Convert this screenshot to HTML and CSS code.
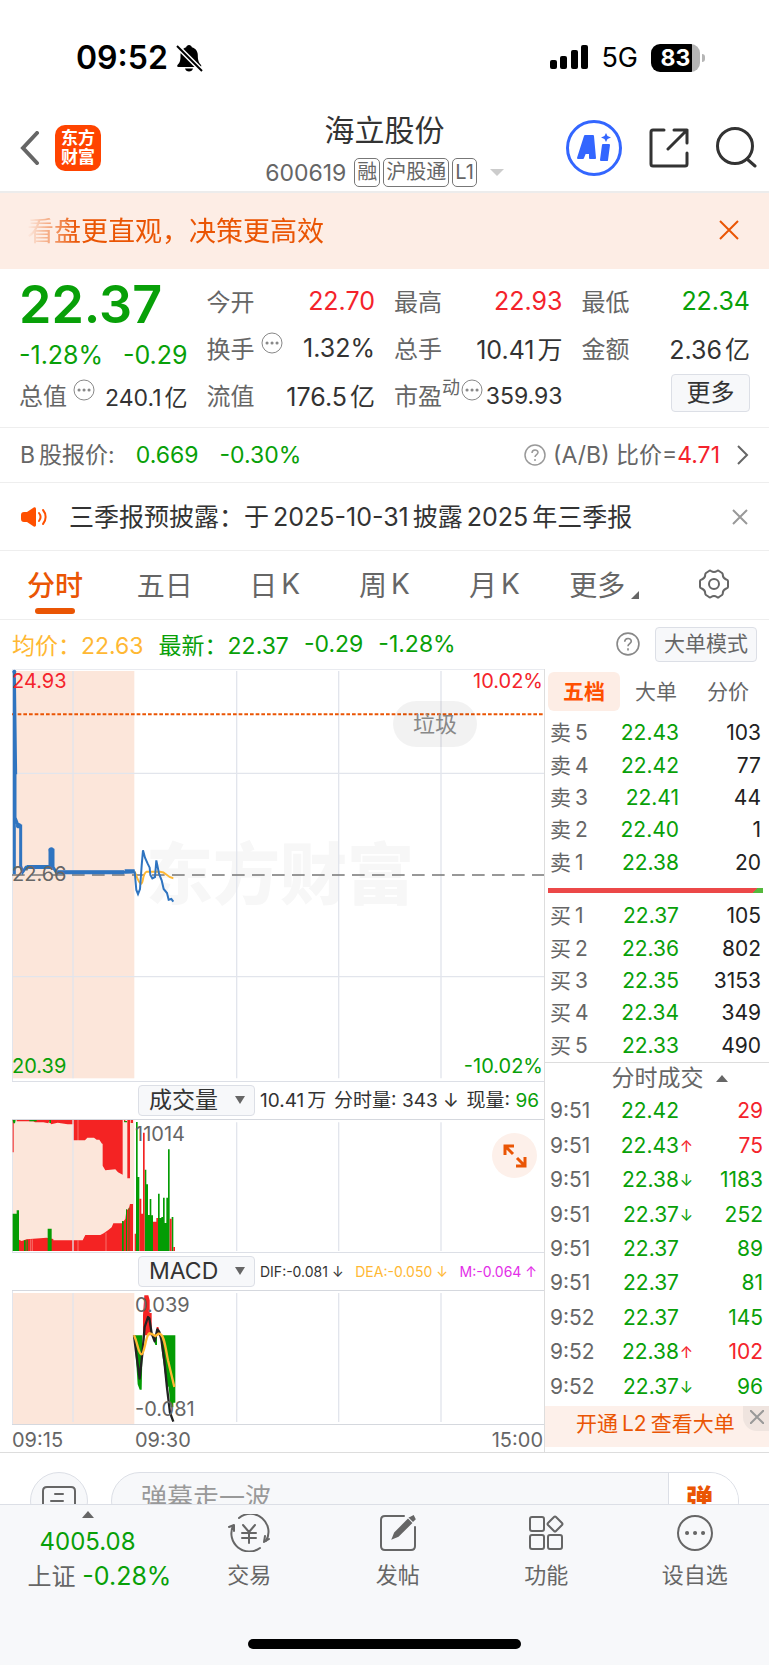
FILE: index.html
```html
<!DOCTYPE html>
<html lang="zh-CN">
<head>
    <meta charset="UTF-8">
    <meta name="viewport" content="width=device-width, initial-scale=1.0">
    <title>海立股份 600619</title>
    <link rel="stylesheet" href="styles.css">
</head>
<body>
    <div class="status-bar">
        <div class="status-left">
            <span class="clock">09:52</span>
            <svg width="27" height="28" viewBox="0 0 27 28">
                <path d="M13 1c1.500 0 2.500 1 2.800 2.200 4 1.200 6 4.300 6 8.300 0 5 1 7 3.200 9.500.7 1 .2 2-1 2H2.500c-1.300 0-1.700-1-1-2C4 18.500 4.500 16.500 4.500 11.500c0-4 2-7.100 5.700-8.300C10.500 2 11.500 1 13 1z"/>
                <path d="M9 24.500h8c-.5 2-2 3-4 3s-3.500-1-4-3z"/>
                <path d="M0 1l26 26" stroke="#fff" stroke-width="5"/>
                <path d="M1 2l25 25" stroke="#000" stroke-width="2"/>
            </svg>
        </div>
        <div class="status-right">
            <svg width="38" height="25" viewBox="0 0 38 25">
                <rect x="0" y="15" width="7" height="9" rx="2"/>
                <rect x="10" y="11" width="7" height="13" rx="2"/>
                <rect x="21" y="5" width="7" height="19" rx="2"/>
                <rect x="31" y="0" width="7" height="24" rx="2"/>
            </svg>
            <span class="network">5G</span>
            <span class="battery">83</span>
        </div>
    </div>

    <header class="top-nav">
        <div class="nav-left">
            <button class="icon-btn" aria-label="返回">
                <svg width="20" height="34" viewBox="0 0 20 34" fill="none" stroke="#666" stroke-width="4" stroke-linecap="round"><path d="M17 2L3 17l14 15"/></svg>
            </button>
            <a class="logo" href="#">东方<br>财富</a>
        </div>
        <div class="nav-title">
            <h1>海立股份</h1>
            <p class="code">600619 <span class="tag">融</span><span class="tag">沪股通</span><span class="tag">L1</span><i class="caret-down"></i></p>
        </div>
        <div class="nav-right">
            <button class="icon-btn" aria-label="AI">
                <svg width="56" height="56" viewBox="0 0 56 56">
                    <circle cx="28" cy="28" r="26.500" fill="none" stroke="#3366ff" stroke-width="3"/>
                    <path fill="#3366ff" fill-rule="evenodd" stroke="#3366ff" stroke-width="2" stroke-linejoin="round" d="M12 38l7-22h8l2 22h-5v-5h-5l-2 5zM20 28h3v-5z"/>
                    <path fill="#3366ff" stroke="#3366ff" stroke-width="2" stroke-linejoin="round" d="M37 25h6l-2 15h-6z"/>
                    <path fill="#3366ff" d="M40 13l1.500 3L45 17.500l-3.500 1.500L40 22l-1.500-3L35 17.500l3.500-1.500z"/>
                </svg>
            </button>
            <button class="icon-btn" aria-label="分享">
                <svg width="40" height="40" viewBox="0 0 40 40" fill="none" stroke="#333" stroke-width="3" stroke-linecap="round" stroke-linejoin="round"><path d="M15 2H4a2 2 0 0 0-2 2v32a2 2 0 0 0 2 2h32a2 2 0 0 0 2-2V25M25 2h13v13M38 2L19 21"/></svg>
            </button>
            <button class="icon-btn" aria-label="搜索">
                <svg width="41" height="41" viewBox="0 0 41 41" fill="none" stroke="#333" stroke-width="3" stroke-linecap="round"><circle cx="19" cy="19" r="17.500"/><path d="M31 32l8 7"/></svg>
            </button>
        </div>
    </header>

    <div class="banner">
        <p>看盘更直观，决策更高效</p>
        <button class="icon-btn" aria-label="关闭">
            <svg width="20" height="20" viewBox="0 0 20 20" stroke="#ea5504" stroke-width="2"><path d="M1 1l18 18M19 1L1 19"/></svg>
        </button>
    </div>

    <section class="quote">
        <div class="quote-main green">
            <strong class="price">22.37</strong>
            <div class="change"><span>-1.28%</span><span>-0.29</span></div>
        </div>
        <div class="item"><span>今开</span><b class="red">22.70</b></div>
        <div class="item"><span>最高</span><b class="red">22.93</b></div>
        <div class="item"><span>最低</span><b class="green">22.34</b></div>
        <div class="item"><span>换手<svg class="dots" viewBox="0 0 22 22"><circle cx="11" cy="11" r="10"/><path d="M6 11h.1M11 11h.1M16 11h.1"/></svg></span><b>1.32%</b></div>
        <div class="item"><span>总手</span><b>10.41<i class="unit">万</i></b></div>
        <div class="item"><span>金额</span><b>2.36<i class="unit">亿</i></b></div>
        <div class="item small"><span>总值<svg class="dots" viewBox="0 0 22 22"><circle cx="11" cy="11" r="10"/><path d="M6 11h.1M11 11h.1M16 11h.1"/></svg></span><b>240.1<i class="unit">亿</i></b></div>
        <div class="item"><span>流值</span><b>176.5<i class="unit">亿</i></b></div>
        <div class="item small"><span>市盈<sup>动</sup><svg class="dots tight" viewBox="0 0 22 22"><circle cx="11" cy="11" r="10"/><path d="M6 11h.1M11 11h.1M16 11h.1"/></svg></span><b>359.93</b></div>
        <div class="item end"><button class="more-btn">更多</button></div>
    </section>

    <section class="b-share">
        <span><b class="num first">B</b>股报价:</span>
        <span class="green">0.669</span>
        <span class="green">-0.30%</span>
        <a class="ratio" href="#">
            <svg width="22" height="22" viewBox="0 0 22 22" fill="none" stroke="#999" stroke-width="1.500"><circle cx="11" cy="11" r="10"/><path d="M8 9c0-4 6-4 6-.5 0 2-3 2.300-3 4.500M11 15v2"/></svg>
            <span>(A/B) 比价=<em class="red">4.71</em></span>
            <svg width="12" height="20" viewBox="0 0 12 20" fill="none" stroke="#666" stroke-width="2"><path d="M1 1l9 9-9 9"/></svg>
        </a>
    </section>

    <section class="notice">
        <svg width="26" height="20" viewBox="0 0 26 20">
            <path fill="#ff5000" d="M3 5h3l6-4c1-1 3-1 3 1v16c0 2-2 2-3 1l-6-4H3c-2 0-3-1-3-3V8c0-2 1-3 3-3z"/>
            <path fill="none" stroke="#ff5000" stroke-width="2" stroke-linecap="round" d="M18 6c2 2.500 2 5.500 0 8M22 3c3.500 4 3.500 10 0 14"/>
        </svg>
        <p>三季报预披露：于<b class="num">2025-10-31</b>披露<b class="num">2025</b>年三季报</p>
        <button class="icon-btn" aria-label="关闭">
            <svg width="16" height="16" viewBox="0 0 16 16" stroke="#999" stroke-width="2"><path d="M1 1l14 14M15 1L1 15"/></svg>
        </button>
    </section>

    <nav class="tabs">
        <button class="active">分时</button>
        <button>五日</button>
        <button>日<b class="num">K</b></button>
        <button>周<b class="num">K</b></button>
        <button>月<b class="num">K</b></button>
        <button class="has-corner">更多</button>
        <button aria-label="设置">
            <svg width="32" height="30" viewBox="0 0 32 30" fill="none" stroke="#666" stroke-width="2" stroke-linejoin="round">
                <path d="M11 2q1-1 2 0 3 2 6 0 1-1 2 0l3 2q1 1 .8 2 0 3 3.500 4.500 1.700.5 1.700 1.500v6q0 1-1.700 1.500-3.500 1.500-3.500 4.500.2 1-.8 2l-3 2q-1 1-2 0-3-2-6 0-1 1-2 0l-3-2q-1-1-.8-2 0-3-3.500-4.500Q2 19 2 18v-6q0-1 1.700-1.500Q7.200 9 7.200 6 7 5 8 4z"/>
                <circle cx="16" cy="15" r="5"/>
            </svg>
        </button>
    </nav>

    <div class="avg-row">
        <span class="yellow">均价：22.63</span>
        <span class="green latest">最新：22.37</span>
        <span class="green">-0.29</span>
        <span class="green">-1.28%</span>
        <svg class="help" width="24" height="24" viewBox="0 0 22 22" fill="none" stroke="#888" stroke-width="1.500"><circle cx="11" cy="11" r="10"/><path d="M8 9c0-4 6-4 6-.5 0 2-3 2.300-3 4.500M11 15v2"/></svg>
        <button class="mode-btn">大单模式</button>
    </div>

    <main class="board">
        <div class="charts">
            <div class="plot">
                <span class="watermark">东方财富</span>
                <!-- price: 1596 x 1236 units, three units to a pixel -->
                <svg class="price-svg" viewBox="36 24 1596 1236" preserveAspectRatio="none">
                    <rect x="36" y="30" width="367" height="1222" fill="#fce6da"/>
                    <path class="grid" d="M36 24H1632M37 30V1260M219 30V1252M710 30V1252M1016 30V1252M1323 30V1252M36 337H1632M36 947H1632"/>
                    <path d="M36 642H1632" stroke="#777" stroke-width="5" stroke-dasharray="38 22" fill="none"/>
                    <path d="M36 160H1632" stroke="#ea5504" stroke-width="6" stroke-dasharray="11 6" fill="none"/>
                    <path d="M404 632C412 650 416 668 424 668 430 665 428 636 440 632H480C500 632 500 650 520 652" stroke="#ffb833" stroke-width="6" fill="none"/>
                    <path d="M43 30V640M43 30l4 310M45 340V470l6 15 5 10h6v120l6 18 10-14h72V568h9v50l10 16H374l30-2" stroke="#2f74c0" stroke-width="9" fill="none"/>
                    <path d="M80 618h70M172 634h200M374 631h30" stroke="#2f74c0" stroke-width="12" fill="none"/>
                    <circle cx="43" cy="32" r="6" fill="#2f74c0"/><circle cx="56" cy="494" r="8" fill="#2f74c0"/><circle cx="154" cy="567" r="8" fill="#2f74c0"/>
                    <path d="M404 632l5 55 5 12 6-15 5-70 4-46 6 22 8 18 6 12 2 22 6 10 8-4 4-50 2 10 6 30 8 20 6 26 10 12 5 20 8-2 6 8" stroke="#2f74c0" stroke-width="6" fill="none"/>
                </svg>
                <span class="label top-left red">24.93</span>
                <span class="label top-right red">10.02%</span>
                <span class="label mid-left">22.66</span>
                <span class="label bottom-left green">20.39</span>
                <span class="label bottom-right green">-10.02%</span>
                <span class="bubble">垃圾</span>
            </div>

            <div class="toolbar">
                <label class="picker"><select aria-label="成交指标"><option>成交量</option></select></label>
                <p class="volume-text"><span>10.41<i class="unit">万</i></span><span>分时量: 343 ↓</span><span>现量: <em class="green">96</em></span></p>
            </div>
            <div class="plot">
                <svg class="volume-svg" viewBox="36 117 1596 396" preserveAspectRatio="none">
                    <rect x="36" y="117" width="367" height="393" fill="#fce6da"/>
                    <path class="grid" d="M37 117V513M710 124V510M1016 124V510M1323 124V510"/>
                    <g fill="#f42323">
                        <path d="M50 117v4h50l5 3h25l15 3 3-8 5 11 20-5 30 5h17v48h35l7-8h20l8 6h8l8 12h2v66l8 14 30-3 8 9 14 7V117z"/>
                        <path d="M38 117h3v97h-3zM382 117h8v175h-8zM372 117h4v6h-4zM392 117h7v9h-7z"/>
                        <path d="M57 510V476l8 4 15-5 60-5 20 4v4h88l8-16h45l10-5 14-10 10-8 5-12h26l10-13 3-25 8-8 3-12h9V510z"/>
                    </g>
                    <g fill="#049c04">
                        <path d="M38 117h9l-2 10h-5zM88 117h22v4H88zM148 117h5v9h-5zM373 120h8v4h-8z"/>
                        <path d="M38 510V398h12v-10h7v122zM143 443h12v67h-12zM366 420h5v90h-5zM378 385h3v125h-3zM386 380h2v130h-2zM72 478h5v32h-5zM80 476h3v34h-3z"/>
                        <path d="M408 123h5v165h5v222h-10zM434 266h5v44h5v92h5v-48h5v49h5v107h-25zM474 338h5v73h5v-3h5v-58h5v76h5v-76h5V205h5v305h-35zM515 408h5v102h-5z"/>
                    </g>
                    <path fill="#f42323" d="M404 458h4v52h-4zM418 353h6v45h5V155h5v355h-16zM459 422h10v-11h5v99h-15zM509 413h6v97h-6zM520 498h5v12h-5z"/>
                    <path d="M219 117V510" class="grid"/>
                    <path d="M234 117V180M92 475V510M97 475V510M234 478V510M318 455V510" stroke="#fce6da" stroke-opacity=".6" stroke-width="2"/>
                </svg>
                <span class="label vol-max">11014</span>
                <button class="expand" aria-label="全屏">
                    <svg width="24" height="24" viewBox="0 0 24 24" fill="none" stroke="#ea5504" stroke-width="3"><path d="M2 11V2h9M2 2l8 8M22 13v9h-9M22 22l-8-8"/></svg>
                </button>
            </div>

            <div class="toolbar">
                <label class="picker"><select aria-label="技术指标"><option>MACD</option></select></label>
                <p class="macd-text"><span>DIF:-0.081 ↓</span><span class="yellow">DEA:-0.050 ↓</span><span class="magenta">M:-0.064 ↑</span></p>
            </div>
            <div class="plot">
                <svg class="macd-svg" viewBox="36 630 1596 399" preserveAspectRatio="none">
                    <rect x="36" y="636" width="367" height="393" fill="#fce6da"/>
                    <path class="grid" d="M37 630V1029M219 636V1023M710 636V1023M1016 636V1023M1323 636V1023"/>
                    <path fill="#049c04" d="M403 763h24v66l-2 97h-6l-6-16-4-60zM460 763h11v29h-5l-4-12zM482 763h44v202h-6v14h-8l-6-60-8-14-6-48-6-42z"/>
                    <path fill="#f42323" d="M429 763v-60l4-60h12l4 15v38h6v67zM468 763l2-25h5l5 15v10z"/>
                    <path d="M402 763l10 80 7 50 8-75 7-80 10-30 4 4 7 45 9 24 8-36 6 8 6 22 9 65 8 80 9 75 10 27" stroke="#222" stroke-width="7" fill="none" stroke-linejoin="round"/>
                    <path d="M402 763c10 20 14 57 22 57 10 0 12-55 24-63l8 2 10 6 10-7c16-2 20 40 28 80l19 80" stroke="#ffb833" stroke-width="7" fill="none"/>
                </svg>
                <span class="label macd-max">0.039</span>
                <span class="label macd-min">-0.081</span>
            </div>

            <div class="axis"><span>09:15</span><span>09:30</span><span>15:00</span></div>
        </div>

        <aside class="side">
            <div class="side-tabs">
                <button class="active">五档</button><button>大单</button><button>分价</button>
            </div>
            <table class="levels">
                <tr><th>卖<b class="num">5</b></th><td>22.43</td><td>103</td></tr>
                <tr><th>卖<b class="num">4</b></th><td>22.42</td><td>77</td></tr>
                <tr><th>卖<b class="num">3</b></th><td>22.41</td><td>44</td></tr>
                <tr><th>卖<b class="num">2</b></th><td>22.40</td><td>1</td></tr>
                <tr><th>卖<b class="num">1</b></th><td>22.38</td><td>20</td></tr>
            </table>
            <div class="ratio-bar"></div>
            <table class="levels">
                <tr><th>买<b class="num">1</b></th><td>22.37</td><td>105</td></tr>
                <tr><th>买<b class="num">2</b></th><td>22.36</td><td>802</td></tr>
                <tr><th>买<b class="num">3</b></th><td>22.35</td><td>3153</td></tr>
                <tr><th>买<b class="num">4</b></th><td>22.34</td><td>349</td></tr>
                <tr><th>买<b class="num">5</b></th><td>22.33</td><td>490</td></tr>
            </table>
            <button class="deals-title">分时成交<i class="caret-up"></i></button>
            <table class="deals">
                <tr><th>9:51</th><td>22.42</td><td></td><td class="red">29</td></tr>
                <tr><th>9:51</th><td>22.43</td><td class="red">↑</td><td class="red">75</td></tr>
                <tr><th>9:51</th><td>22.38</td><td>↓</td><td>1183</td></tr>
                <tr><th>9:51</th><td>22.37</td><td>↓</td><td>252</td></tr>
                <tr><th>9:51</th><td>22.37</td><td></td><td>89</td></tr>
                <tr><th>9:51</th><td>22.37</td><td></td><td>81</td></tr>
                <tr><th>9:52</th><td>22.37</td><td></td><td>145</td></tr>
                <tr><th>9:52</th><td>22.38</td><td class="red">↑</td><td class="red">102</td></tr>
                <tr><th>9:52</th><td>22.37</td><td>↓</td><td>96</td></tr>
            </table>
            <div class="l2">
                <a href="#">开通<b class="num">L2</b>查看大单</a>
                <button class="l2-close" aria-label="关闭">
                    <svg width="14" height="14" viewBox="0 0 14 14" stroke="#999" stroke-width="2"><path d="M0 0l14 14M14 0L0 14"/></svg>
                </button>
            </div>
        </aside>
    </main>

    <div class="danmaku">
        <button class="danmaku-list" aria-label="弹幕列表">
            <svg width="34" height="30" viewBox="0 0 34 30" fill="none" stroke="#666" stroke-width="2" stroke-linecap="round"><path d="M1 28V5q0-4 4-4h24q4 0 4 4v23M13 8h8M9 15h12"/></svg>
        </button>
        <div class="danmaku-box">
            <input type="text" placeholder="弹幕走一波" aria-label="弹幕">
            <button class="danmaku-send">弹</button>
        </div>
    </div>

    <footer class="bottom">
        <nav class="bottom-nav">
            <a class="index" href="#">
                <i class="caret-up"></i>
                <span class="green">4005.08</span>
                <span class="index-name">上证 <em class="green">-0.28%</em></span>
            </a>
            <a href="#">
                <svg width="44" height="38" viewBox="0 0 44 38" fill="none" stroke="#666" stroke-width="2" stroke-linecap="round" stroke-linejoin="round"><path d="M12 4A18 18 0 0 1 39 27M33 34A18 18 0 0 1 6 12M2 13l5-2 0 6M42 25l-5 3 1-6M16 11l6 7 6-7M22 18v11M15 19h14M15 24h14"/></svg>
                <span>交易</span>
            </a>
            <a href="#">
                <svg width="38" height="38" viewBox="0 0 38 38" fill="none" stroke="#666" stroke-width="2" stroke-linecap="round"><path d="M25 2H6Q2 2 2 6v26q0 4 4 4h26q4 0 4-4V13"/><path d="M14 24l2-5L29 6l3 3-13 13z" fill="#666"/><path d="M32 4l2-1 1 2-1 1z" fill="#666" stroke-width="3"/></svg>
                <span>发帖</span>
            </a>
            <a href="#">
                <svg width="36" height="38" viewBox="0 0 36 38" fill="none" stroke="#666" stroke-width="2" stroke-linejoin="round"><rect x="2" y="3" width="14" height="14" rx="2"/><rect x="2" y="21" width="14" height="14" rx="2"/><rect x="20" y="21" width="14" height="14" rx="2"/><path d="M26 3q1-1 2 0l6 6q1 1 0 2l-6 6q-1 1-2 0l-6-6q-1-1 0-2z"/></svg>
                <span>功能</span>
            </a>
            <a href="#">
                <svg width="38" height="38" viewBox="0 0 38 38" fill="none" stroke="#666" stroke-width="2"><circle cx="19" cy="19" r="17"/><path d="M11 19h.1M19 19h.1M27 19h.1" stroke-width="4" stroke-linecap="round"/></svg>
                <span>设自选</span>
            </a>
        </nav>
        <div class="home-indicator"></div>
    </footer>
</body>
</html>
```
FILE: styles.css
```css
* {
    margin: 0;
    padding: 0;
    box-sizing: border-box;
}

body {
    font-family: Inter, "Noto Sans CJK SC", sans-serif;
    background: #fff;
    color: #333;
    min-height: 100vh;
    display: flex;
    flex-direction: column;
}

button, input, select {
    font-family: inherit;
    color: inherit;
    background: none;
    border: none;
}

a {
    color: inherit;
    text-decoration: none;
}

b, em, i, th {
    font-weight: normal;
    font-style: normal;
}

svg {
    display: block;
    flex-shrink: 0;
}

.icon-btn {
    display: block;
}

.red {
    color: #f4232b;
}

.green {
    color: #08a008;
}

.yellow {
    color: #ffb833;
}

.magenta {
    color: #e32ee8;
}

/* latin text between chinese characters */
.num {
    margin: 0 4px;
}

.num.first {
    margin-left: 0;
}

.unit {
    margin-left: 3px;
}

.caret-up, .caret-down {
    display: inline-block;
    border: 6px solid transparent;
}

.caret-up {
    border-bottom: 7px solid #666;
    border-top: 0;
}

.caret-down {
    border-width: 7px;
    border-top-color: #ccc;
    border-bottom: 0;
}

/* status bar */
.status-bar {
    height: 106px;
    padding: 9px 69px 0 76px;
    display: flex;
    align-items: center;
    justify-content: space-between;
    color: #000;
}

.status-left, .status-right {
    display: flex;
    align-items: center;
}

.status-left {
    gap: 8px;
}

.status-right {
    gap: 13px;
}

.clock {
    font-size: 32px;
    font-weight: 600;
}

.network {
    font-size: 27px;
}

.battery {
    position: relative;
    width: 49px;
    height: 28px;
    border-radius: 9px;
    background: linear-gradient(90deg, #000 83%, #b5b5b5 83%);
    color: #fff;
    font-size: 23px;
    font-weight: 700;
    line-height: 28px;
    text-align: center;
}

.battery::after {
    content: "";
    position: absolute;
    left: 51px;
    top: 10px;
    width: 3px;
    height: 8px;
    border-radius: 0 3px 3px 0;
    background: #b5b5b5;
}

/* nav */
.top-nav {
    height: 87px;
    padding: 0 12px 2px;
    border-bottom: 2px solid #ececec;
    display: grid;
    grid-template-columns: 1fr auto 1fr;
    align-items: center;
}

.nav-left, .nav-right {
    display: flex;
    align-items: center;
}

.nav-left {
    padding-left: 8px;
    gap: 15px;
}

.nav-right {
    justify-content: flex-end;
    gap: 27px;
}

.logo {
    width: 46px;
    height: 46px;
    padding-top: 4px;
    border-radius: 10px;
    background: #ff4400;
    color: #fff;
    font-size: 17px;
    font-weight: 700;
    line-height: 19px;
    text-align: center;
}

.nav-title {
    text-align: center;
}

.nav-title h1 {
    margin-bottom: 6px;
    font-size: 30px;
    font-weight: 400;
    line-height: 44px;
}

.code {
    display: flex;
    align-items: center;
    justify-content: center;
    gap: 3px;
    font-size: 23px;
    line-height: 30px;
    color: #666;
}

.tag {
    padding: 0 2px;
    border: 1px solid #777;
    border-radius: 5px;
    font-size: 20px;
    line-height: 27px;
}

.tag:first-of-type {
    margin-left: 5px;
}

.code .caret-down {
    margin-left: 10px;
}

/* banner */
.banner {
    height: 76px;
    padding: 0 30px 2px 27px;
    display: flex;
    align-items: center;
    justify-content: space-between;
    background: #fdede5;
    color: #ea5504;
    font-size: 27px;
}

.banner p {
    padding-bottom: 2px;
    -webkit-mask-image: linear-gradient(90deg, transparent, #000 50px);
    mask-image: linear-gradient(90deg, transparent, #000 50px);
}

/* quote */
.quote {
    padding: 9px 19px 8px;
    display: grid;
    grid-template-columns: repeat(4, 1fr);
    grid-auto-rows: 47px;
    column-gap: 19px;
    border-bottom: 1px solid #eee;
}

.quote-main {
    grid-row: span 2;
}

.price {
    display: block;
    font-size: 52px;
    font-weight: 600;
    line-height: 54px;
}

.change {
    display: flex;
    justify-content: space-between;
    font-size: 25px;
    line-height: 46px;
}

.item {
    display: flex;
    align-items: center;
    justify-content: space-between;
    font-size: 24px;
    white-space: nowrap;
}

.item span {
    display: flex;
    padding-bottom: 3px;
    color: #666;
}

.item b {
    padding-bottom: 2px;
    font-size: 25px;
}

.item.end {
    justify-content: flex-end;
}

.item.small b {
    padding-bottom: 0;
    font-size: 23px;
}

.item sup {
    font-size: 18px;
    line-height: 22px;
}

.dots {
    width: 22px;
    height: 22px;
    margin: 2px 0 0 6px;
    fill: none;
    stroke: #888;
    stroke-width: 1;
}

.dots.tight {
    margin-left: 1px;
}

.dots path {
    stroke-width: 3;
    stroke-linecap: round;
}

.more-btn {
    width: 79px;
    height: 38px;
    margin-bottom: 5px;
    border: 1px solid #dcdfe6;
    border-radius: 4px;
    background: #f7f8fa;
    font-size: 24px;
    line-height: 34px;
}

/* b share */
.b-share {
    height: 55px;
    padding: 0 20px;
    display: flex;
    align-items: center;
    gap: 21px;
    border-bottom: 1px solid #eee;
    font-size: 23px;
    line-height: 32px;
    color: #666;
}

.ratio {
    display: flex;
    align-items: center;
    gap: 7px;
    margin-left: auto;
}

.ratio span {
    margin-right: 10px;
}

/* notice */
.notice {
    height: 68px;
    padding: 0 21px;
    display: flex;
    align-items: center;
    gap: 22px;
    border-bottom: 1px solid #eee;
    font-size: 25px;
}

.notice p {
    flex: 1;
    padding-bottom: 3px;
}

/* tabs */
.tabs {
    height: 69px;
    display: grid;
    grid-template-columns: repeat(7, 1fr);
    border-bottom: 1px solid #eee;
}

.tabs button {
    position: relative;
    display: flex;
    align-items: center;
    justify-content: center;
    padding-bottom: 3px;
    font-size: 28px;
    color: #666;
}

.tabs .num {
    margin-right: 0;
}

.tabs .active {
    color: #ea5504;
    font-weight: 500;
}

.tabs .active::after {
    content: "";
    position: absolute;
    left: 50%;
    bottom: 5px;
    width: 40px;
    height: 6px;
    margin-left: -20px;
    border-radius: 3px;
    background: #ea5504;
}

.has-corner::after {
    content: "";
    align-self: flex-end;
    margin: 0 0 17px 6px;
    border-left: 8px solid transparent;
    border-bottom: 8px solid #666;
}

/* average row */
.avg-row {
    height: 49px;
    padding: 0 12px 1px;
    display: flex;
    align-items: center;
    gap: 15px;
    font-size: 23px;
}

.help {
    margin-left: auto;
}

.mode-btn {
    height: 35px;
    padding: 0 8px;
    border: 1px solid #dcdfe6;
    border-radius: 4px;
    background: #f7f8fa;
    color: #666;
    font-size: 21px;
    line-height: 30px;
}

/* board */
.board {
    padding-left: 12px;
    display: grid;
    grid-template-columns: 1fr 225px;
    border-bottom: 1px solid #ddd;
}

.charts {
    min-width: 0;
}

.plot {
    position: relative;
}

.plot svg {
    position: relative;
    width: 100%;
}

.price-svg {
    height: 412px;
}

.volume-svg {
    height: 132px;
}

.macd-svg {
    height: 133px;
}

.grid {
    fill: none;
    stroke: #e2e5ec;
    stroke-width: 4;
}

.watermark {
    position: absolute;
    top: 158px;
    left: 134px;
    color: #f7f7f7;
    font-size: 67px;
    font-weight: 900;
    line-height: 96px;
}

.label {
    position: absolute;
    font-size: 20px;
    line-height: 24px;
}

.top-left {
    top: 0;
    left: 0;
}

.top-right {
    top: 0;
    right: 1px;
}

.mid-left, .vol-max, .macd-max, .macd-min {
    color: #666;
}

.mid-left {
    top: 193px;
    left: 0;
}

.bottom-left {
    bottom: 3px;
    left: 0;
}

.bottom-right {
    bottom: 3px;
    right: 1px;
}

.vol-max, .macd-max {
    top: 2px;
    left: 123px;
}

.macd-min {
    bottom: 3px;
    left: 123px;
}

.bubble {
    position: absolute;
    top: 32px;
    right: 67px;
    padding: 0 20px;
    border-radius: 23px;
    background: rgba(0, 0, 0, 0.05);
    color: #888;
    font-size: 22px;
    line-height: 46px;
}

.toolbar {
    height: 39px;
    padding-left: 126px;
    display: flex;
    align-items: center;
    gap: 5px;
    border-top: 1px solid #dcdfe6;
    border-bottom: 1px solid #d5d8de;
}

.picker {
    position: relative;
    width: 117px;
}

.picker select {
    display: block;
    width: 100%;
    height: 31px;
    padding-left: 10px;
    appearance: none;
    border: 1px solid #dcdfe6;
    border-radius: 4px;
    background: #f7f8fa;
    font-size: 23px;
    line-height: 29px;
}

.picker::after {
    content: "";
    position: absolute;
    right: 10px;
    top: 11px;
    border: 5px solid transparent;
    border-top: 8px solid #666;
    border-bottom: 0;
}

.volume-text, .macd-text {
    flex: 1;
    display: flex;
    justify-content: space-between;
    white-space: nowrap;
}

.volume-text {
    padding-right: 5px;
    font-size: 19px;
    line-height: 30px;
}

.macd-text {
    padding-right: 7px;
    font-size: 14px;
}

.plot .expand {
    position: absolute;
    top: 13px;
    right: 7px;
    width: 45px;
    height: 45px;
    border-radius: 50%;
    background: #fdf0ea;
}

.plot .expand svg {
    width: 24px;
    margin: 0 auto;
}

.axis {
    height: 28px;
    border-top: 1px solid #d5d8de;
    display: flex;
    padding-right: 1px;
    font-size: 20px;
    line-height: 30px;
    color: #666;
}

.axis span:first-child {
    width: 123px;
}

.axis span:last-child {
    margin-left: auto;
}

/* side */
.side {
    border-left: 1px solid #ddd;
    font-size: 21px;
    color: #666;
}

.side-tabs {
    margin: 3px 5px 6px 3px;
    display: grid;
    grid-template-columns: repeat(3, 1fr);
}

.side-tabs button {
    height: 39px;
    padding-bottom: 3px;
    border-radius: 6px;
    font-size: 21px;
}

.side-tabs .active {
    background: #fdede5;
    color: #ff5000;
    font-weight: 700;
}

.side table {
    width: 100%;
    table-layout: fixed;
    border-collapse: collapse;
    line-height: 30px;
}

.levels {
    height: 162px;
}

.side th {
    width: 60px;
    padding-left: 5px;
    text-align: left;
}

.side td {
    text-align: right;
    color: #08a008;
}

.levels td:nth-child(2), .deals td:nth-child(2) {
    width: 74px;
}

.levels td:last-child {
    color: #222;
    padding-right: 8px;
}

.ratio-bar {
    height: 5px;
    margin: 9px 6px 7px 3px;
    background: linear-gradient(135deg, #ec4848 95%, #55b83c 95%);
}

.deals-title {
    display: flex;
    width: 100%;
    align-items: center;
    justify-content: center;
    gap: 12px;
    padding-left: 25px;
    border-top: 1px solid #ddd;
    font-size: 23px;
    line-height: 31px;
}

.deals {
    height: 310px;
}

.deals td:nth-child(3) {
    width: 15px;
    font-size: 16px;
    text-align: center;
}

.deals td:last-child {
    padding-right: 6px;
}

.deals .red {
    color: #f4232b;
}

.l2 {
    position: relative;
    height: 41px;
    margin-top: 2px;
    padding-left: 31px;
    background: #fdf0ea;
    color: #ea5504;
    font-size: 21px;
    line-height: 36px;
}

.l2-close {
    position: absolute;
    top: 0;
    right: 0;
    width: 26px;
    height: 25px;
    padding-left: 7px;
    border-radius: 0 0 0 14px;
    background: #efe4df;
}

.l2-close svg {
    margin-top: -4px;
}

/* danmaku */
.danmaku {
    height: 51px;
    padding: 19px 30px 0;
    display: flex;
    gap: 23px;
    overflow: hidden;
}

.danmaku-list {
    width: 58px;
    height: 58px;
    flex-shrink: 0;
    padding: 13px 11px;
    border: 1px solid #dcdfe6;
    border-radius: 50%;
    background: #f7f8fa;
}

.danmaku-box {
    flex: 1;
    height: 58px;
    display: flex;
    border: 1px solid #dcdfe6;
    border-radius: 29px;
    background: #f7f8fa;
    overflow: hidden;
}

.danmaku-box input {
    flex: 1;
    min-width: 0;
    padding: 0 0 8px 29px;
    font-size: 26px;
}

.danmaku-box input::placeholder {
    color: #999;
}

.danmaku-send {
    width: 70px;
    border-left: 1px solid #dcdfe6;
    background: #fff;
    color: #ea5504;
    font-size: 27px;
    font-weight: 900;
    padding: 0 8px 8px 0;
}

/* bottom bar */
.bottom {
    flex: 1;
    display: flex;
    flex-direction: column;
    justify-content: space-between;
    border-top: 1px solid #dcdfe6;
    background: #f7f8fa;
}

.bottom-nav {
    display: grid;
    grid-template-columns: 175px repeat(4, 1fr);
    padding-top: 6px;
    color: #666;
}

.bottom-nav a {
    display: flex;
    flex-direction: column;
    align-items: center;
    gap: 5px;
    padding-top: 3px;
    font-size: 22px;
    line-height: 36px;
    white-space: nowrap;
}

.bottom-nav .index {
    gap: 0;
    padding-top: 0;
    font-size: 24px;
}

.index .green {
    line-height: 48px;
}

.index .index-name {
    margin-top: -8px;
    padding-left: 24px;
}

.index-name .green {
    font-size: 25px;
    line-height: 36px;
}

.home-indicator {
    width: 273px;
    height: 10px;
    margin: 0 auto 16px;
    border-radius: 5px;
    background: #000;
}
```
